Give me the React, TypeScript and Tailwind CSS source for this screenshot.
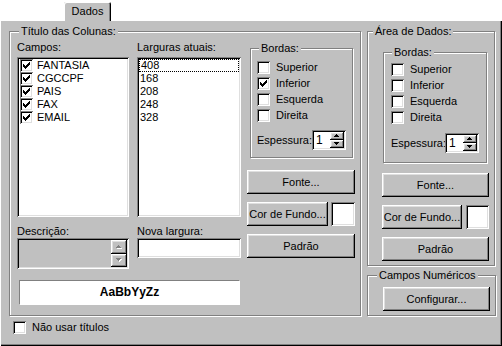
import React from 'react';

const raised =
  'bg-[#c0c0c0] shadow-[inset_-1px_-1px_0_#000,inset_1px_1px_0_#fff,inset_-2px_-2px_0_#808080,inset_2px_2px_0_#dfdfdf]';
const sunken =
  'shadow-[inset_1px_1px_0_#808080,inset_-1px_-1px_0_#fff,inset_2px_2px_0_#000,inset_-2px_-2px_0_#dfdfdf]';
const etched = 'border border-[#808080] shadow-[1px_1px_0_#fff,inset_1px_1px_0_#fff]';

const Tick = () => (
  <svg width="7" height="7" viewBox="0 0 7 7" shapeRendering="crispEdges">
    {[2, 3, 4, 3, 2, 1, 0].map((t, i) => (
      <rect key={i} x={i} y={t} width="1" height="3" fill="#000" />
    ))}
  </svg>
);

// small pixel triangle, up or down
const Arrow = ({ down, color = '#000', shadow }: { down?: boolean; color?: string; shadow?: boolean }) => {
  const rows = down ? [5, 3, 1] : [1, 3, 5];
  return (
    <svg width="6" height="4" viewBox="0 0 6 4" shapeRendering="crispEdges">
      {shadow &&
        rows.map((w, i) => (
          <rect key={'s' + i} x={(5 - w) / 2 + 1} y={i + 1} width={w} height="1" fill="#fff" />
        ))}
      {rows.map((w, i) => (
        <rect key={i} x={(5 - w) / 2} y={i} width={w} height="1" fill={color} />
      ))}
    </svg>
  );
};

const CheckBox = ({ checked }: { checked?: boolean }) => (
  <span className={`flex h-[13px] w-[13px] shrink-0 items-center justify-center bg-white ${sunken}`}>
    {checked && <Tick />}
  </span>
);

const Check = ({ label, checked }: { label: string; checked?: boolean }) => (
  <div className="flex h-[13px] items-center gap-[6px]">
    <CheckBox checked={checked} />
    <span>{label}</span>
  </div>
);

const Group = ({
  title,
  titleLeft,
  className,
  children,
}: {
  title: string;
  titleLeft: string;
  className: string;
  children?: React.ReactNode;
}) => (
  <div className={`relative ${etched} ${className}`}>
    <span className={`absolute -top-[7px] ${titleLeft} bg-[#c0c0c0] px-[2px] leading-[13px]`}>{title}</span>
    {children}
  </div>
);

const Button = ({ label, className }: { label: string; className: string }) => (
  <div className={`flex h-[24px] items-center justify-center ${raised} ${className}`}>{label}</div>
);

const Spin = () => (
  <div className={`flex h-[20px] w-[34px] items-stretch bg-white p-[2px] ${sunken}`}>
    <span className="flex-1 pl-[2px] pt-[1px] text-[12px] leading-[15px]">1</span>
    <div className="flex w-[14px] flex-col">
      <div className={`flex flex-1 items-center justify-center ${raised}`}>
        <Arrow />
      </div>
      <div className={`flex flex-1 items-center justify-center ${raised}`}>
        <Arrow down />
      </div>
    </div>
  </div>
);

const Bordas = ({
  box,
  pad,
  spinGap,
  labelW,
  inferior,
}: {
  box: string;
  pad: string;
  spinGap: string;
  labelW: string;
  inferior?: boolean;
}) => (
  <Group title="Bordas:" titleLeft="left-[8px]" className={box}>
    <div className={`flex flex-col gap-[3px] ${pad}`}>
      <Check label="Superior" />
      <Check label="Inferior" checked={inferior} />
      <Check label="Esquerda" />
      <Check label="Direita" />
    </div>
    <div className={`flex items-center ${spinGap}`}>
      <span className={labelW}>Espessura:</span>
      <Spin />
    </div>
  </Group>
);

const campos = ['FANTASIA', 'CGCCPF', 'PAIS', 'FAX', 'EMAIL'];
const larguras = ['408', '168', '208', '248', '328'];

export default function App() {
  return (
    <div className="h-[346px] w-[502px] overflow-hidden bg-white font-['Liberation_Sans',Arial,sans-serif] text-[11px] leading-[13px] text-black">
      {/* tab strip */}
      <div className="flex h-[20px] items-end pl-[64px]">
        <div className="relative z-10 -mb-px flex h-[19px] w-[47px] items-center justify-center rounded-t-[2px] bg-[#c0c0c0] shadow-[inset_1px_1px_0_#fff,inset_-1px_0_0_#000,inset_-2px_0_0_#808080]">
          Dados
        </div>
      </div>

      {/* tab page */}
      <div className="flex h-[326px] flex-col bg-[#c0c0c0] pl-[9px] pt-[11px] shadow-[inset_1px_1px_0_#fff,inset_-1px_-1px_0_#000,inset_-2px_-2px_0_#808080]">
        <div className="flex gap-[6px]">
          {/* Título das Colunas */}
          <Group title="Título das Colunas:" titleLeft="left-[9px]" className="flex h-[285px] w-[352px] pl-[7px] pt-[9px]">
            <div className="flex flex-col">
              <div className="flex gap-[8px]">
                <div className="flex w-[112px] flex-col">
                  <span>Campos:</span>
                  <div className={`mt-[3px] flex h-[160px] flex-col overflow-hidden bg-white p-[2px] pl-[3px] ${sunken}`}>
                    {campos.map((c) => (
                      <div key={c} className="flex h-[13px] items-center gap-[4px]">
                        <CheckBox checked />
                        <span>{c}</span>
                      </div>
                    ))}
                  </div>
                  <span className="mt-[8px]">Descrição:</span>
                  <div className={`flex h-[31px] justify-end bg-[#c0c0c0] p-[2px] ${sunken}`}>
                    <div className="flex w-[16px] flex-col">
                      <div className={`flex flex-1 items-center justify-center ${raised}`}>
                        <Arrow color="#808080" shadow />
                      </div>
                      <div className={`flex flex-1 items-center justify-center ${raised}`}>
                        <Arrow down color="#808080" shadow />
                      </div>
                    </div>
                  </div>
                </div>
                <div className="flex w-[104px] flex-col">
                  <span>Larguras atuais:</span>
                  <div className={`mt-[3px] flex h-[160px] flex-col overflow-hidden bg-white p-[2px] ${sunken}`}>
                    {larguras.map((l, i) => (
                      <div
                        key={l}
                        className={`flex h-[13px] items-center pl-[1px] ${i === 0 ? 'border border-dotted border-black' : 'px-px'}`}
                      >
                        {l}
                      </div>
                    ))}
                  </div>
                  <span className="mt-[8px]">Nova largura:</span>
                  <div className={`h-[20px] bg-white ${sunken}`} />
                </div>
              </div>
              <div className="ml-[2px] mt-[11px] flex h-[25px] w-[221px] items-center justify-center border border-b-white border-l-[#808080] border-r-white border-t-[#808080] bg-white text-[12px] font-bold">
                AaBbYyZz
              </div>
            </div>

            <div className="ml-[6px] flex w-[108px] flex-col">
              <Bordas
                box="ml-[3px] mt-[7px] h-[110px] w-[103px] pl-[6px]"
                pad="pt-[12px]"
                spinGap="mt-[8px]"
                labelW="w-[55px]"
                inferior
              />
              <div className="mt-[12px] flex flex-col gap-[8px]">
                <Button label="Fonte..." className="w-[108px]" />
                <div className="flex gap-[3px]">
                  <Button label="Cor de Fundo..." className="w-[81px]" />
                  <div className={`h-[24px] w-[24px] bg-white ${sunken}`} />
                </div>
                <Button label="Padrão" className="w-[108px]" />
              </div>
            </div>
          </Group>

          {/* right column */}
          <div className="flex flex-col">
            <Group title="Área de Dados:" titleLeft="left-[5px]" className="h-[235px] w-[128px] pl-[14px]">
              <Bordas
                box="ml-px mt-[20px] h-[111px] w-[104px] pl-[7px]"
                pad="pt-[10px]"
                spinGap="mt-[9px]"
                labelW="w-[54px]"
              />
              <div className="mt-[10px] flex flex-col gap-[8px]">
                <Button label="Fonte..." className="w-[107px]" />
                <div className="flex gap-[4px]">
                  <Button label="Cor de Fundo..." className="w-[80px]" />
                  <div className={`h-[24px] w-[23px] bg-white ${sunken}`} />
                </div>
                <Button label="Padrão" className="w-[107px]" />
              </div>
            </Group>
            <Group title="Campos Numéricos" titleLeft="left-[9px]" className="mt-[9px] h-[41px] w-[129px] pl-[15px] pt-[11px]">
              <Button label="Configurar..." className="w-[107px]" />
            </Group>
          </div>
        </div>

        <div className="ml-[4px] mt-[5px] flex items-center gap-[6px]">
          <CheckBox />
          <span>Não usar títulos</span>
        </div>
      </div>
    </div>
  );
}
